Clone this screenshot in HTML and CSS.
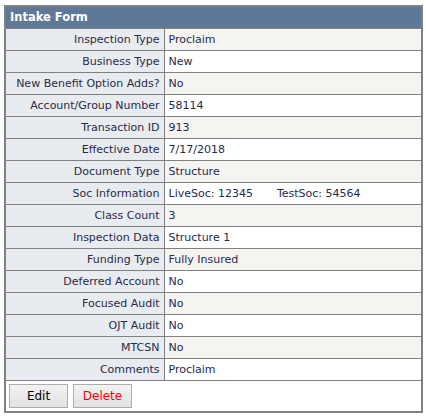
FILE: index.html
```html
<!DOCTYPE html>
<html lang="en">

<head>
    <meta charset="UTF-8" />
    <meta name="viewport" content="width=device-width, initial-scale=1.0" />
    <title>Intake Form</title>
    <link rel="stylesheet" href="styles.css">
</head>

<body>
    <table class="form-table">
        <tr>
            <th colspan="2" class="form-title">Intake Form</th>
        </tr>
        <tr><td class="label">Inspection Type</td><td class="value">Proclaim</td></tr>
        <tr><td class="label">Business Type</td><td class="value">New</td></tr>
        <tr><td class="label">New Benefit Option Adds?</td><td class="value">No</td></tr>
        <tr><td class="label">Account/Group Number</td><td class="value">58114</td></tr>
        <tr><td class="label">Transaction ID</td><td class="value">913</td></tr>
        <tr><td class="label">Effective Date</td><td class="value">7/17/2018</td></tr>
        <tr><td class="label">Document Type</td><td class="value">Structure</td></tr>
        <tr><td class="label">Soc Information</td><td class="value">LiveSoc: 12345<span class="gap"></span>TestSoc: 54564</td></tr>
        <tr><td class="label">Class Count</td><td class="value">3</td></tr>
        <tr><td class="label">Inspection Data</td><td class="value">Structure 1</td></tr>
        <tr><td class="label">Funding Type</td><td class="value">Fully Insured</td></tr>
        <tr><td class="label">Deferred Account</td><td class="value">No</td></tr>
        <tr><td class="label">Focused Audit</td><td class="value">No</td></tr>
        <tr><td class="label">OJT Audit</td><td class="value">No</td></tr>
        <tr><td class="label">MTCSN</td><td class="value">No</td></tr>
        <tr><td class="label">Comments</td><td class="value">Proclaim</td></tr>
        <tr>
            <td colspan="2" class="actions">
                <div class="btn-row">
                    <button class="btn">Edit</button>
                    <button class="btn btn-delete">Delete</button>
                </div>
            </td>
        </tr>
    </table>
</body>

</html>
```

FILE: styles.css
```css
body {
    margin: 0;
    padding: 5px 4px;
    font-family: 'DejaVu Sans', Verdana, sans-serif;
    font-size: 11px;
    background: #fff;
}

.form-table {
    width: 419px;
    border-collapse: collapse;
    border: 2px solid #808080;
}

.form-table td,
.form-table th {
    border: 1px solid #808080;
    height: 22px;
    padding: 0 4px;
    box-sizing: border-box;
}

.form-title {
    background: #5f7897;
    color: #fff;
    text-align: left;
    font-weight: bold;
    font-size: 11.5px;
}

.label {
    width: 159px;
    text-align: right;
    background: #e8ecf0;
    color: #2a2a48;
    white-space: nowrap;
}

.value {
    color: #1e2a50;
    background: #fff;
}

tr:nth-child(even) .value {
    background: #f5f4f0;
}

.gap {
    display: inline-block;
    width: 24px;
}

.form-table .actions {
    background: #fff;
    height: 30px;
    padding: 3px 3px;
}

.btn-row {
    display: flex;
    gap: 5px;
}

.btn {
    font-family: inherit;
    font-size: 12px;
    width: 59px;
    height: 24px;
    border: 1px solid #adadad;
    background: linear-gradient(#f2f2f2, #e3e3e3);
    color: #000;
    border-radius: 0;
}

.btn-delete {
    color: #f00;
}
```
